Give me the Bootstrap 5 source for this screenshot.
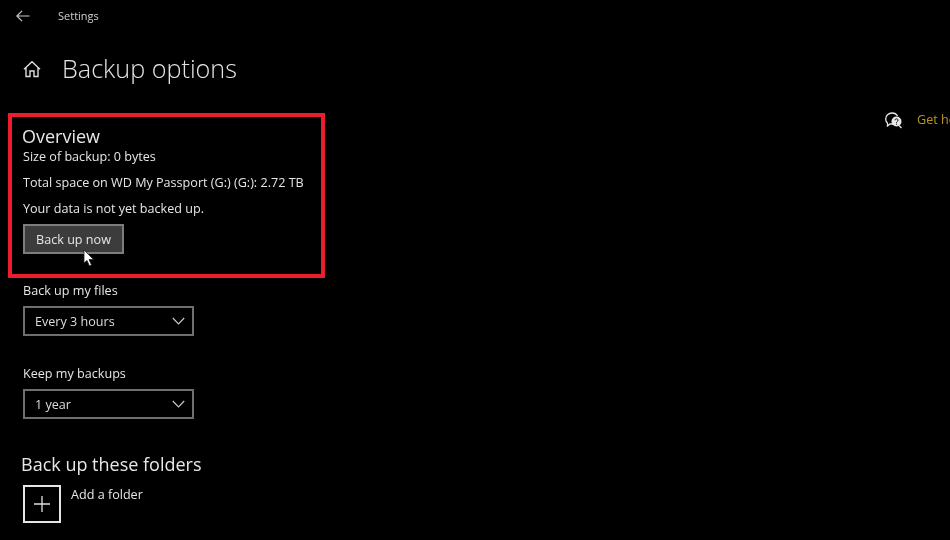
<!DOCTYPE html>
<html lang="en">
<head>
<meta charset="utf-8">
<title>Backup options</title>
<link href="https://cdn.jsdelivr.net/npm/bootstrap@5.3.0/dist/css/bootstrap.min.css" rel="stylesheet">
<style>
html, body { height: 100%; }
body { background: #000; color: #e6e6e6; font-family: "Open Sans", "Noto Sans", sans-serif; font-size: 12.6px; overflow: hidden; width: 950px; height: 540px; }
.shell { width: 950px; height: 540px; overflow: hidden; position: relative; filter: blur(.4px); }
.topbar { height: 32px; padding-left: 16px; gap: 28px; }
.topbar-title { font-size: 11px; color: #d0d0d0; }
.page-head { height: 47px; margin-top: 13px; padding-left: 23px; gap: 21px; }
.page-title { font-size: 25.2px; font-weight: 300; color: #e4e4e4; line-height: 1; margin: 0; }
.redbox { width: 317px; height: 165px; margin: 21px 0 0 8px; border: 4px solid #ed1c2e; padding: 8px 0 0 10px; }
.sect-title { font-size: 18px; font-weight: 400; line-height: 22px; margin: 0; color: #e8e8e8; }
.line-text { line-height: 16px; margin: 0 0 10px 1px; white-space: nowrap; }
.line-tight { margin-top: 2px; }
.now-btn { width: 101px; height: 30px; background: #3c3c3c; border: 2px solid #7d7d7d; border-radius: 0; color: #e6e6e6; font-size: 12.6px; padding: 2px 0 0; margin: -3px 0 0 1px; }
.now-btn:hover { background: #3c3c3c; color: #e6e6e6; border-color: #7d7d7d; }
.opts { padding-left: 23px; }
.opt-label { line-height: 16px; margin: 5px 0 7px; }
.pick { width: 171px; height: 30px; border: 2px solid #6f6f6f; padding: 2px 7px 0 10px; margin-bottom: 30px; color: #dcdcdc; }
.pick svg { margin-top: -2px; }
.sect-folders { margin: 0 0 0 -2px; padding-top: 3px; line-height: 24px; }
.add-row { gap: 10px; margin-top: 9px; }
.add-box { width: 38px; height: 38px; border: 2px solid #e6e6e6; }
.add-text { line-height: 16px; margin-top: 2px; }
.helpbar { position: absolute; left: 885px; top: 111px; gap: 14px; white-space: nowrap; }
.help-link { color: #b8961e; line-height: 18px; }
.cursor { position: absolute; left: 83px; top: 249px; }
</style>
</head>
<body>
<div class="shell">
  <div class="topbar d-flex align-items-center">
    <svg width="14" height="12" viewBox="0 0 14 12" fill="none" stroke="#c8c8c8" stroke-width="1.2"><path d="M13.5 6H1M6 .8 .9 6l5.1 5.200"/></svg>
    <span class="topbar-title">Settings</span>
  </div>
  <div class="page-head d-flex align-items-center">
    <svg width="18" height="18" viewBox="0 0 18 18" fill="none" stroke="#dcdcdc" stroke-width="1.400"><path d="M1 9.200 9 1.800l8 7.400M3 7.500V16.500H7V11H11V16.500H15V7.500"/></svg>
    <h1 class="page-title">Backup options</h1>
  </div>
  <div class="redbox">
    <h2 class="sect-title">Overview</h2>
    <p class="line-text line-tight">Size of backup: 0 bytes</p>
    <p class="line-text">Total space on WD My Passport (G:) (G:): 2.72 TB</p>
    <p class="line-text">Your data is not yet backed up.</p>
    <button type="button" class="btn now-btn">Back up now</button>
  </div>
  <div class="opts">
    <p class="opt-label">Back up my files</p>
    <div class="pick d-flex align-items-center justify-content-between">
      <span>Every 3 hours</span>
      <svg width="13" height="8" viewBox="0 0 13 8" fill="none" stroke="#c8c8c8" stroke-width="1.200"><path d="M.8 1 6.500 6.800 12.200 1"/></svg>
    </div>
    <p class="opt-label">Keep my backups</p>
    <div class="pick d-flex align-items-center justify-content-between">
      <span>1 year</span>
      <svg width="13" height="8" viewBox="0 0 13 8" fill="none" stroke="#c8c8c8" stroke-width="1.200"><path d="M.8 1 6.500 6.800 12.200 1"/></svg>
    </div>
    <h2 class="sect-title sect-folders">Back up these folders</h2>
    <div class="add-row d-flex align-items-start">
      <div class="add-box d-flex align-items-center justify-content-center">
        <svg width="16" height="16" viewBox="0 0 16 16" fill="none" stroke="#e0e0e0" stroke-width="1.300"><path d="M8 0V16M0 8H16"/></svg>
      </div>
      <span class="add-text">Add a folder</span>
    </div>
  </div>
  <div class="helpbar d-flex align-items-center">
    <svg width="18" height="17" viewBox="0 0 18 17" fill="none" stroke="#e8e8e8" stroke-width="1.300"><path d="M8 12H5L2.500 14V11C1 10 .7 8.500 .7 7 .7 3.500 3.500 1 7 1c2.500 0 4.500 1 5.500 3"/><circle cx="11.500" cy="9.500" r="5" fill="#e8e8e8" stroke="none"/><path d="M14 13.500 16.500 16" /><path d="M10 8.300c0-2 3-2 3 0 0 1.200-1.500 1.200-1.500 2.400M11.500 11.700v1" stroke="#000" stroke-width="1"/></svg>
    <span class="help-link">Get help</span>
  </div>
  <svg class="cursor" width="12" height="18" viewBox="0 0 12 18"><path d="M1 1V14L4 11.500 6.500 17 8.500 16 6 10.500H10.500Z" fill="#fff" stroke="#222" stroke-width=".8"/></svg>
</div>
<script src="https://cdn.jsdelivr.net/npm/bootstrap@5.3.0/dist/js/bootstrap.bundle.min.js"></script>
</body>
</html>
